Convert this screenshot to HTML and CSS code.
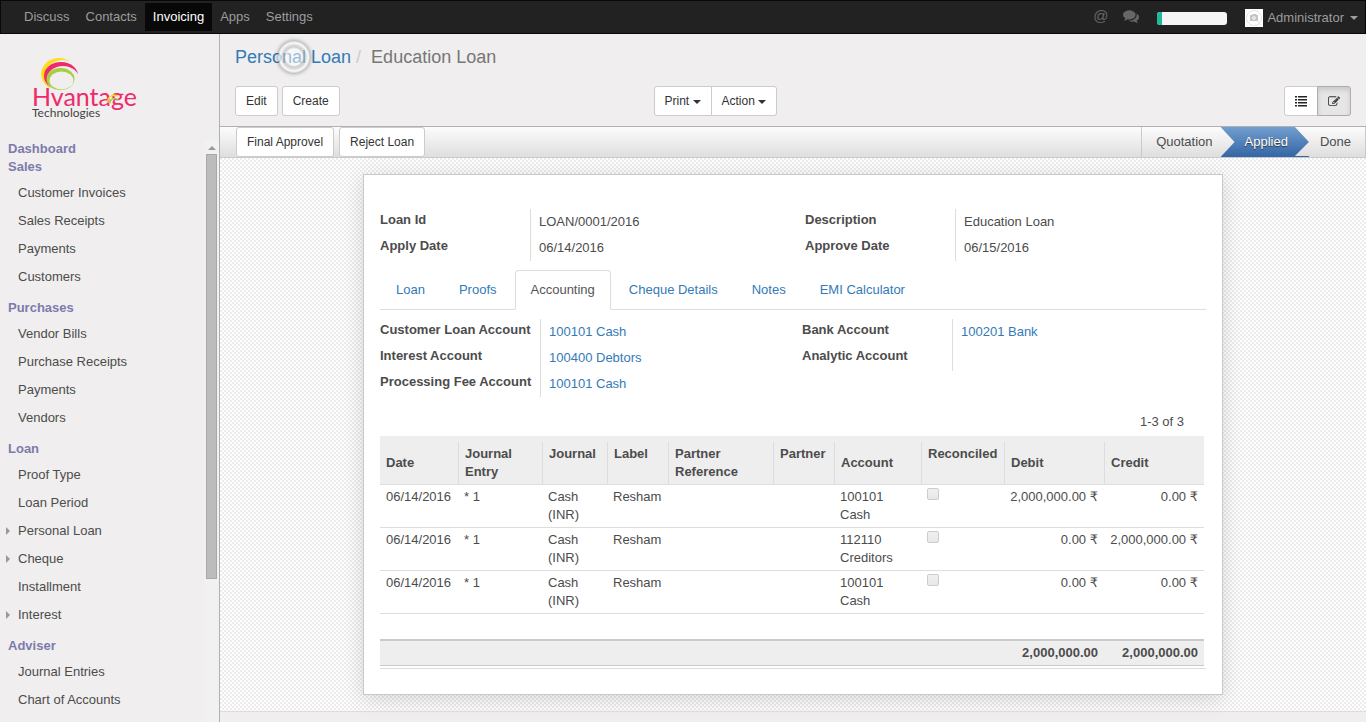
FILE: index.html
```html
<!DOCTYPE html>
<html lang="en">
<head>
    <meta charset="utf-8">
    <title>Education Loan - Odoo</title>
    <link rel="stylesheet" href="styles.css">
</head>
<body>
    <nav class="navbar">
        <ul class="nav-menu">
            <li><a href="#">Discuss</a></li>
            <li><a href="#">Contacts</a></li>
            <li class="active"><a href="#">Invoicing</a></li>
            <li><a href="#">Apps</a></li>
            <li><a href="#">Settings</a></li>
        </ul>
        <div class="nav-right">
            <a href="#" class="nav-at" title="New message">@</a>
            <a href="#" class="nav-chat" title="Conversations">
                <svg width="16" height="16" viewBox="0 0 1792 1792"><path fill="currentColor" d="M1408 768q0 139-94 257t-256.500 186.500-353.500 68.500q-86 0-176-16-124 88-278 128-36 9-86 16h-3q-11 0-20.500-8t-11.500-21q-1-3-1-6.500t.5-6.500 2-6l2.500-5 3.500-5.500 4-5 4.500-5 4-4.500q5-6 23-25t26-29.500 22.500-29 25-38.500 20.500-44q-124-72-195-177t-71-224q0-139 94-257t256.500-186.500 353.500-68.500 353.500 68.500 256.500 186.500 94 257zm384 256q0 120-71 224.500t-195 176.500q10 24 20.500 44t25 38.500 22.500 29 26 29.500 23 25q1 1 4 4.500t4.500 5 4 5 3.500 5.500l2.500 5 2 6 .5 6.500-1 6.500q-3 14-13 22t-22 7q-50-7-86-16-154-40-278-128-90 16-176 16-271 0-472-132 58 4 88 4 161 0 309-45t264-129q125-92 192-212t67-254q0-77-23-152 129 71 204 178t75 230z"/></svg>
            </a>
            <div class="planner"><div class="planner-bar"></div></div>
            <a href="#" class="user">
                <svg class="avatar" width="18" height="18" viewBox="0 0 18 18">
                    <rect width="18" height="18" fill="#fff"/>
                    <circle cx="9" cy="9" r="7.500" fill="none" stroke="#e4e4e4"/>
                    <path d="M5 6h2l1-1h3l1 1h1v6H5z" fill="#c4c4c4"/>
                    <circle cx="9" cy="9" r="1.500" fill="#ddd" stroke="#eee"/>
                    <path d="M12 12l4 4" stroke="#e4e4e4"/>
                </svg>
                Administrator
                <span class="caret"></span>
            </a>
        </div>
    </nav>

    <div class="webclient">
        <aside class="sidebar">
            <a href="#" class="logo" title="Hvantage Technologies">
                <svg width="112" height="70" viewBox="0 0 112 70">
                    <ellipse cx="31" cy="22" rx="18" ry="16" fill="#ffdd1c"/>
                    <ellipse cx="35" cy="24" rx="18" ry="16" fill="#f0eeee"/>
                    <ellipse cx="33" cy="24" rx="17" ry="14" fill="#ee2a6b"/>
                    <ellipse cx="35" cy="27" rx="16" ry="13" fill="#f0eeee"/>
                    <ellipse cx="32.500" cy="27" rx="14" ry="11" fill="#a5cf3f"/>
                    <ellipse cx="33.500" cy="28.500" rx="12" ry="9" fill="#f0eeee"/>
                    <text class="logo-name" x="4" y="54">Hvantage</text>
                    <text class="logo-sub" x="4" y="65">Technologies</text>
                    <path fill="none" stroke="#ffdd1c" stroke-width="1.500" d="M80 51C79 45 84 42 90 44"/>
                    <path fill="none" stroke="#a5cf3f" stroke-width="1.500" d="M82 51C82 47 86 45 90 48"/>
                </svg>
            </a>
            <div class="menu-scroll">
                <div class="menu">
                    <h4>Dashboard</h4>
                    <h4>Sales</h4>
                    <ul>
                        <li><a href="#">Customer Invoices</a></li>
                        <li><a href="#">Sales Receipts</a></li>
                        <li><a href="#">Payments</a></li>
                        <li><a href="#">Customers</a></li>
                    </ul>
                    <h4>Purchases</h4>
                    <ul>
                        <li><a href="#">Vendor Bills</a></li>
                        <li><a href="#">Purchase Receipts</a></li>
                        <li><a href="#">Payments</a></li>
                        <li><a href="#">Vendors</a></li>
                    </ul>
                    <h4>Loan</h4>
                    <ul>
                        <li><a href="#">Proof Type</a></li>
                        <li><a href="#">Loan Period</a></li>
                        <li class="has-children"><a href="#">Personal Loan</a></li>
                        <li class="has-children"><a href="#">Cheque</a></li>
                        <li><a href="#">Installment</a></li>
                        <li class="has-children"><a href="#">Interest</a></li>
                    </ul>
                    <h4>Adviser</h4>
                    <ul>
                        <li><a href="#">Journal Entries</a></li>
                        <li><a href="#">Chart of Accounts</a></li>
                    </ul>
                </div>
                <div class="scrollbar">
                    <div class="scroll-up"></div>
                    <div class="scroll-thumb"></div>
                </div>
            </div>
        </aside>

        <main class="content">
            <header class="control-panel">
                <ol class="breadcrumb">
                    <li><a href="#">Personal Loan</a></li>
                    <li>Education Loan</li>
                </ol>
                <div class="touch-ring"></div>
                <div class="cp-row">
                    <div class="cp-buttons">
                        <button class="btn">Edit</button>
                        <button class="btn">Create</button>
                    </div>
                    <div class="btn-group">
                        <button class="btn">Print <span class="caret"></span></button>
                        <button class="btn">Action <span class="caret"></span></button>
                    </div>
                    <div class="btn-group cp-switch">
                        <button class="btn btn-icon" title="List">
                            <svg width="12" height="12" viewBox="0 0 12 12" fill="#222"><path d="M0 1h2v1.500H0zM0 4h2v1.500H0zM0 7h2v1.500H0zM0 10h2v1.500H0zM3 1h9v1.500H3zM3 4h9v1.500H3zM3 7h9v1.500H3zM3 10h9v1.500H3z"/></svg>
                        </button>
                        <button class="btn btn-icon active" title="Form">
                            <svg width="13" height="13" viewBox="0 0 1792 1792"><path fill="#333" d="M888 1184l116-116-152-152-116 116v56h96v96h56zm440-720q-16-16-33 1l-350 350q-17 17-1 33t33-1l350-350q17-17 1-33zm80 594v190q0 119-84.500 203.500t-203.500 84.500h-832q-119 0-203.500-84.500t-84.500-203.500v-832q0-119 84.500-203.500t203.500-84.500h832q63 0 117 25 15 7 18 23 3 17-9 29l-49 49q-14 14-32 8-23-6-45-6h-832q-66 0-113 47t-47 113v832q0 66 47 113t113 47h832q66 0 113-47t47-113v-126q0-13 9-22l64-64q15-15 35-7t20 29zm-96-738l288 288-672 672h-288v-288zm444 132l-92 92-288-288 92-92q28-28 68-28t68 28l152 152q28 28 28 68t-28 68z"/></svg>
                        </button>
                    </div>
                </div>
            </header>

            <div class="statusbar">
                <div class="status-buttons">
                    <button class="btn">Final Approvel</button>
                    <button class="btn">Reject Loan</button>
                </div>
                <ul class="steps">
                    <li>Quotation</li>
                    <li class="current">Applied</li>
                    <li>Done</li>
                </ul>
            </div>

            <div class="sheet-bg">
                <div class="sheet">
                    <div class="groups">
                        <dl class="group">
                            <dt>Loan Id</dt><dd>LOAN/0001/2016</dd>
                            <dt>Apply Date</dt><dd>06/14/2016</dd>
                        </dl>
                        <dl class="group">
                            <dt>Description</dt><dd>Education Loan</dd>
                            <dt>Approve Date</dt><dd>06/15/2016</dd>
                        </dl>
                    </div>

                    <ul class="tabs">
                        <li><a href="#">Loan</a></li>
                        <li><a href="#">Proofs</a></li>
                        <li class="active"><a href="#">Accounting</a></li>
                        <li><a href="#">Cheque Details</a></li>
                        <li><a href="#">Notes</a></li>
                        <li><a href="#">EMI Calculator</a></li>
                    </ul>

                    <div class="tab-pane">
                        <div class="groups groups-accounts">
                            <dl class="group group-wide">
                                <dt>Customer Loan Account</dt><dd><a href="#">100101 Cash</a></dd>
                                <dt>Interest Account</dt><dd><a href="#">100400 Debtors</a></dd>
                                <dt>Processing Fee Account</dt><dd><a href="#">100101 Cash</a></dd>
                            </dl>
                            <dl class="group">
                                <dt>Bank Account</dt><dd><a href="#">100201 Bank</a></dd>
                                <dt>Analytic Account</dt><dd></dd>
                            </dl>
                        </div>

                        <div class="pager">1-3 of 3</div>
                        <table class="lines">
                            <colgroup>
                                <col class="c-date"><col class="c-entry"><col class="c-journal"><col class="c-label"><col class="c-ref">
                                <col class="c-partner"><col class="c-account"><col class="c-rec"><col class="c-amount"><col class="c-amount">
                            </colgroup>
                            <thead>
                                <tr>
                                    <th>Date</th>
                                    <th>Journal Entry</th>
                                    <th class="top">Journal</th>
                                    <th class="top">Label</th>
                                    <th>Partner Reference</th>
                                    <th class="top">Partner</th>
                                    <th>Account</th>
                                    <th class="top">Reconciled</th>
                                    <th>Debit</th>
                                    <th>Credit</th>
                                </tr>
                            </thead>
                            <tbody>
                                <tr>
                                    <td>06/14/2016</td><td>* 1</td><td>Cash (INR)</td><td>Resham</td><td></td><td></td><td>100101 Cash</td>
                                    <td><input type="checkbox" aria-label="Reconciled" disabled></td>
                                    <td class="num">2,000,000.00 <span class="cur">₹</span></td><td class="num">0.00 <span class="cur">₹</span></td>
                                </tr>
                                <tr>
                                    <td>06/14/2016</td><td>* 1</td><td>Cash (INR)</td><td>Resham</td><td></td><td></td><td>112110 Creditors</td>
                                    <td><input type="checkbox" aria-label="Reconciled" disabled></td>
                                    <td class="num">0.00 <span class="cur">₹</span></td><td class="num">2,000,000.00 <span class="cur">₹</span></td>
                                </tr>
                                <tr>
                                    <td>06/14/2016</td><td>* 1</td><td>Cash (INR)</td><td>Resham</td><td></td><td></td><td>100101 Cash</td>
                                    <td><input type="checkbox" aria-label="Reconciled" disabled></td>
                                    <td class="num">0.00 <span class="cur">₹</span></td><td class="num">0.00 <span class="cur">₹</span></td>
                                </tr>
                                <tr class="blank"><td colspan="10"></td></tr>
                            </tbody>
                            <tfoot>
                                <tr>
                                    <td colspan="8"></td>
                                    <td class="num">2,000,000.00</td>
                                    <td class="num">2,000,000.00</td>
                                </tr>
                            </tfoot>
                        </table>
                    </div>
                </div>
            </div>
            <div class="chatter"></div>
        </main>
    </div>
</body>
</html>
```
FILE: styles.css
```css
* {
    box-sizing: border-box;
}
body {
    margin: 0;
    height: 100vh;
    display: flex;
    flex-direction: column;
    overflow: hidden;
    font-family: "Liberation Sans", Arial, sans-serif;
    font-size: 13px;
    line-height: 18px;
    color: #4c4c4c;
    background-color: #f0eeee;
}
ul, ol, dl, dd, h4 {
    margin: 0;
    padding: 0;
    list-style: none;
}
a {
    color: #337ab7;
    text-decoration: none;
}
.caret {
    display: inline-block;
    vertical-align: middle;
    border-top: 4px solid;
    border-left: 4px solid transparent;
    border-right: 4px solid transparent;
}

/* top bar */
.navbar {
    flex: none;
    display: flex;
    justify-content: space-between;
    height: 34px;
    border: 1px solid #080808;
    background-color: #222;
}
.nav-menu {
    display: flex;
    padding: 2px 0 2px 15px;
}
.nav-menu a {
    display: block;
    padding: 5px 8px;
    color: #9d9d9d;
}
.nav-menu .active a {
    color: #fff;
    background-color: #080808;
}
.nav-right {
    display: flex;
    align-items: center;
    padding: 2px 7px 0 0;
}
.nav-at, .nav-chat {
    display: flex;
    color: #666;
    margin-right: 15px;
    padding-bottom: 5px;
}
.nav-at {
    font-size: 15px;
}
.nav-chat {
    margin-right: 18px;
}
.planner {
    width: 70px;
    height: 13px;
    margin-right: 18px;
    border-radius: 3px;
    overflow: hidden;
    background-color: #f5f5f5;
}
.planner-bar {
    width: 5px;
    height: 13px;
    background-color: #21b799;
}
.user {
    display: flex;
    align-items: center;
    gap: 4px;
    color: #9d9d9d;
}
.user .caret {
    margin-left: 2px;
}

.webclient {
    flex: 1;
    min-height: 0;
    display: flex;
}

/* left menu */
.sidebar {
    width: 220px;
    flex: none;
    display: flex;
    flex-direction: column;
    border-right: 1px solid #afafb6;
}
.logo {
    display: block;
    padding: 18px 28px;
}
.logo svg {
    display: block;
}
.logo-name {
    font-family: Lato, sans-serif;
    font-size: 25px;
    fill: #ee2a6b;
}
.logo-sub {
    font-family: Lato, sans-serif;
    font-size: 12px;
    fill: #444;
}
.menu-scroll {
    flex: 1;
    min-height: 0;
    display: flex;
}
.menu {
    flex: 1;
    overflow: hidden;
}
.menu h4 {
    padding-left: 8px;
    font-size: 13px;
    line-height: 18px;
    color: #7c7bad;
}
.menu ul {
    padding: 3px 0 8px;
}
.menu li {
    padding: 5px 0 5px 18px;
}
.menu li a {
    color: #4c4c4c;
}
.menu .has-children {
    display: flex;
    align-items: center;
    gap: 8px;
    padding-left: 6px;
}
.has-children::before {
    content: "";
    border-left: 4px solid #999;
    border-top: 4px solid transparent;
    border-bottom: 4px solid transparent;
}
.scrollbar {
    width: 15px;
    display: flex;
    flex-direction: column;
    align-items: center;
    background-color: #f1f1f1;
}
.scroll-up {
    margin: 6px 0 4px;
    border-bottom: 4px solid #999;
    border-left: 4px solid transparent;
    border-right: 4px solid transparent;
}
.scroll-thumb {
    width: 11px;
    height: 73%;
    border: 1px solid #a8a8a8;
    background-color: #bcbcbc;
}

/* control panel */
.content {
    flex: 1;
    min-width: 0;
    display: flex;
    flex-direction: column;
}
.control-panel {
    position: relative;
    padding: 12px 15px 10px;
    border-bottom: 1px solid #afafb6;
}
.breadcrumb {
    display: flex;
    font-size: 18px;
    line-height: 22px;
    color: #777;
    margin-bottom: 18px;
}
.breadcrumb li + li::before {
    content: "/";
    padding: 0 10px 0 5px;
    color: #ccc;
}
.touch-ring {
    position: absolute;
    left: 58px;
    top: 7px;
    width: 32px;
    height: 32px;
    border-radius: 50%;
    background: radial-gradient(circle, rgba(255,255,255,.5) 0 7px, rgba(255,255,255,.7) 8px, rgba(185,185,185,.6) 10px, rgba(200,200,200,.5) 12px, rgba(255,255,255,.8) 14px, rgba(190,190,190,.6) 16px);
    box-shadow: 0 0 4px rgba(0,0,0,.45);
}
.cp-row {
    display: grid;
    grid-template-columns: 3fr 4fr 1fr;
}
.cp-buttons, .status-buttons {
    display: flex;
    gap: 4px;
}
.status-buttons {
    gap: 5px;
}
.btn {
    font-family: inherit;
    font-size: 12px;
    line-height: 18px;
    padding: 5px 10px;
    color: #333;
    background-color: #fff;
    border: 1px solid #ccc;
    border-radius: 3px;
}
.btn-group {
    display: flex;
}
.btn-group .btn:first-child {
    border-radius: 3px 0 0 3px;
}
.btn-group .btn:last-child {
    margin-left: -1px;
    border-radius: 0 3px 3px 0;
}
.cp-switch {
    justify-content: flex-end;
}
.btn-icon {
    width: 34px;
    display: flex;
    align-items: center;
    justify-content: center;
}
.btn-icon.active {
    background-color: #e6e6e6;
    border-color: #adadad;
    box-shadow: inset 0 3px 5px rgba(0,0,0,.125);
}

/* status bar */
.statusbar {
    display: flex;
    justify-content: space-between;
    padding-left: 16px;
    border-bottom: 1px solid #cacaca;
    background: linear-gradient(#fcfcfc, #dedede);
}
.steps {
    display: flex;
    border: 1px solid #cacaca;
    border-width: 0 1px;
    line-height: 30px;
}
.steps li {
    padding: 0 14px 0 11px;
}
.steps li:first-child {
    padding: 0 8px 0 14px;
}
.steps .current {
    padding: 0 21px 0 24px;
    color: #fff;
    text-shadow: 0 1px 1px #333;
    background: linear-gradient(#729fcf, #3465a4);
    clip-path: polygon(0 0, calc(100% - 14px) 0, 100% 50%, calc(100% - 14px) calc(100% - 1px), 100% calc(100% - 1px), 100% 100%, 0 100%, 14px 50%);
}

/* form sheet */
.sheet-bg {
    padding: 16px;
    background: repeating-conic-gradient(#fff 0 25%, #ececec 0 50%) 0 0 / 4px 4px;
}
.sheet {
    max-width: 860px;
    margin: 0 auto;
    padding: 34px 16px 25px;
    background-color: #fff;
    border: 1px solid #c8c8d3;
    box-shadow: 0 4px 20px rgba(0,0,0,.15);
}
.groups {
    display: grid;
    grid-template-columns: 1fr 1fr;
    align-items: start;
    column-gap: 24px;
}
.groups-accounts {
    column-gap: 20px;
}
.group {
    display: grid;
    grid-template-columns: 150px 1fr;
    grid-auto-rows: 26px;
}
.group-wide {
    grid-template-columns: 160px 1fr;
}
.group dt {
    padding-top: 2px;
    font-weight: bold;
    white-space: nowrap;
}
.group dd {
    padding: 4px 0 4px 8px;
    border-left: 1px solid #ddd;
}
.tabs {
    display: flex;
    gap: 2px;
    margin-top: 9px;
    border-bottom: 1px solid #ddd;
}
.tabs a {
    display: block;
    margin-bottom: -1px;
    padding: 10px 15px;
    border: 1px solid transparent;
    border-radius: 4px 4px 0 0;
}
.tabs .active a {
    color: #555;
    background-color: #fff;
    border-color: #ddd;
    border-bottom-color: #fff;
}
.tab-pane {
    padding: 9px 2px 2px 0;
    border-bottom: 1px solid #ddd;
}

/* journal items */
.pager {
    margin-top: 16px;
    padding: 0 20px 5px;
    text-align: right;
}
.lines {
    width: 100%;
    table-layout: fixed;
    border-collapse: separate;
    border-spacing: 0;
}
.c-date { width: 78px; }
.c-entry { width: 84px; }
.c-journal { width: 65px; }
.c-label { width: 61px; }
.c-ref { width: 105px; }
.c-partner { width: 61px; }
.c-account { width: 87px; }
.c-rec { width: 83px; }
.c-amount { width: 100px; }
.lines th {
    padding: 9px 6px 3px 7px;
    text-align: left;
    vertical-align: middle;
    border-bottom: 1px solid #ddd;
    background: linear-gradient(#ddd, #ddd) 0 6px / 1px 100% no-repeat #eee;
}
.lines th:first-child {
    padding-left: 6px;
    background: #eee;
}
.lines th.top {
    vertical-align: top;
}
.lines td {
    padding: 3px 6px;
    vertical-align: top;
    border-bottom: 1px solid #ddd;
}
.lines .num {
    padding-left: 0;
    text-align: right;
    white-space: nowrap;
}
.cur {
    font-family: "DejaVu Sans", sans-serif;
    line-height: 1;
}
.lines .blank td {
    height: 25px;
    border: 0;
}
.lines tfoot td {
    font-weight: bold;
    background-color: #eee;
    border-top: 2px solid #cacaca;
    border-bottom: 1px solid #cacaca;
}
.lines input {
    appearance: none;
    display: block;
    width: 12px;
    height: 12px;
    margin: 0;
    border: 1px solid #ccc;
    border-radius: 2px;
    background: linear-gradient(#f0f0f0, #e8e8e8);
}
.chatter {
    flex: 1;
    border-top: 1px solid #ddd;
}
```
